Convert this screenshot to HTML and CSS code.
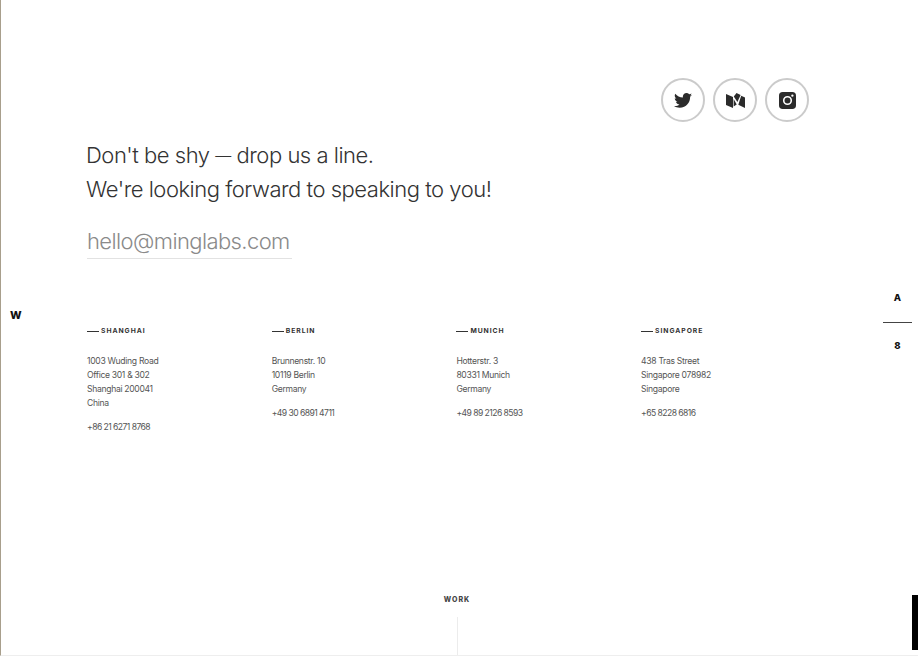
FILE: index.html
```html
<!DOCTYPE html>
<html lang="en">
<head>
    <meta charset="UTF-8">
    <meta name="viewport" content="width=device-width, initial-scale=1.0">
    <title>Contact</title>
    <link rel="stylesheet" href="styles.css">
</head>
<body>
<div class="page">
    <div class="social">
        <a class="social-btn" href="#">
            <svg width="18" height="15" viewBox="0 0 24 20"><path d="M24 2.400c-.9.4-1.800.7-2.800.8 1-.6 1.800-1.600 2.200-2.700-1 .6-2 1-3.100 1.200C19.300.7 18 .1 16.700.1c-2.700 0-4.900 2.200-4.900 4.900 0 .4 0 .8.100 1.100C7.700 5.900 4.100 4 1.700.9 1.200 1.600 1 2.500 1 3.400c0 1.700.9 3.200 2.200 4.100-.8 0-1.600-.2-2.200-.6v.1c0 2.400 1.700 4.400 3.900 4.800-.4.100-.8.200-1.300.2-.3 0-.6 0-.9-.1.6 2 2.400 3.400 4.600 3.400-1.700 1.300-3.800 2.100-6.100 2.100-.4 0-.8 0-1.200-.1 2.200 1.400 4.800 2.200 7.500 2.200 9.100 0 14-7.500 14-14v-.6c1-.7 1.800-1.600 2.500-2.500z"/></svg>
        </a>
        <a class="social-btn" href="#">
            <svg width="19" height="15" viewBox="0 0 19 15"><path d="M0 1 7 4V15L0 12z"/><path d="M7.800 3.400 10.500 0 14.600 2 11.400 9z"/><path d="M15.200 2.800 19 4.600V15L12.300 11.700z"/><path d="M7.600 6 10.700 11.500 7.600 13.500z"/></svg>
        </a>
        <a class="social-btn" href="#">
            <svg width="17" height="17" viewBox="0 0 16 16"><path fill-rule="evenodd" d="M3.500 0h9A3.500 3.500 0 0 1 16 3.500v9a3.500 3.500 0 0 1-3.500 3.500h-9A3.500 3.500 0 0 1 0 12.500v-9A3.500 3.500 0 0 1 3.500 0zM8 3.700a4.300 4.300 0 1 0 0 8.600 4.300 4.300 0 0 0 0-8.600zm0 1.500a2.800 2.800 0 1 1 0 5.600 2.800 2.800 0 0 1 0-5.600zM12.600 2.300a1.100 1.100 0 1 0 0 2.200 1.100 1.100 0 0 0 0-2.200z"/></svg>
        </a>
    </div>

    <p class="intro">Don't be shy <span class="dash">—</span> drop us a line.<br>We're looking forward to speaking to you!</p>
    <a class="email" href="#">hello@minglabs.com</a>

    <div class="offices">
        <div class="office">
            <h4>Shanghai</h4>
            <p>1003 Wuding Road<br>Office 301 &amp; 302<br>Shanghai 200041<br>China</p>
            <p class="phone">+86 21 6271 8768</p>
        </div>
        <div class="office">
            <h4>Berlin</h4>
            <p>Brunnenstr. 10<br>10119 Berlin<br>Germany</p>
            <p class="phone">+49 30 6891 4711</p>
        </div>
        <div class="office">
            <h4>Munich</h4>
            <p>Hotterstr. 3<br>80331 Munich<br>Germany</p>
            <p class="phone">+49 89 2126 8593</p>
        </div>
        <div class="office">
            <h4>Singapore</h4>
            <p>438 Tras Street<br>Singapore 078982<br>Singapore</p>
            <p class="phone">+65 8228 6816</p>
        </div>
    </div>
</div>

<!-- fixed bits around the edges -->
<div class="side-logo">W</div>
<div class="pager">
    <span>A</span>
    <div class="pager-line"></div>
    <span>8</span>
</div>
<div class="next-link">
    <span>Work</span>
    <div class="next-line"></div>
</div>
<div class="scroll-thumb"></div>
</body>
</html>
```

FILE: styles.css
```css
html, body {
    height: 100%;
}

body {
    font-family: Inter, "Liberation Sans", sans-serif;
    background-color: #ffffff;
    color: #333;
    margin: 0;
    overflow: hidden;
    border-left: 1px solid #a89f8c;
    border-bottom: 1px solid #eeeeee;
    box-sizing: border-box;
}

.page {
    width: 808px;
    padding: 78px 0 0 86px;
    box-sizing: border-box;
}

.social {
    display: flex;
    justify-content: flex-end;
    gap: 8px;
}

.social-btn {
    width: 44px;
    height: 44px;
    box-sizing: border-box;
    border: 2px solid #cbcbcb;
    border-radius: 50%;
    display: flex;
    align-items: center;
    justify-content: center;
}

.social-btn svg {
    fill: #2b2b2b;
}

.intro {
    font-size: 22px;
    font-weight: 300;
    letter-spacing: -0.48px;
    line-height: 34px;
    margin: 16px 0 0 -1px;
}

.dash {
    font-size: 16px;
    line-height: 1;
    vertical-align: 2px;
}

.email {
    display: inline-block;
    font-size: 22px;
    font-weight: 300;
    letter-spacing: -0.6px;
    line-height: 34px;
    color: #8a8a8a;
    text-decoration: none;
    border-bottom: 1px solid #e2e2e2;
    margin-top: 18px;
    padding-right: 2px;
}

.offices {
    display: grid;
    grid-template-columns: repeat(4, 184.7px);
    margin-top: 65px;
}

.office h4 {
    display: flex;
    align-items: center;
    gap: 2px;
    font-size: 6.8px;
    font-weight: 700;
    letter-spacing: 0.95px;
    line-height: 14px;
    text-transform: uppercase;
    color: #333;
    margin: 0 0 16px;
}

.office h4::before {
    content: "";
    width: 12px;
    height: 1px;
    background-color: #333;
}

.office p {
    font-size: 8.6px;
    font-weight: 400;
    letter-spacing: -0.32px;
    line-height: 14px;
    color: #555;
    margin: 0 0 10px;
}

.office .phone {
    letter-spacing: -0.55px;
}

.side-logo {
    position: absolute;
    left: 10px;
    top: 308px;
    font-size: 11px;
    font-weight: 800;
    line-height: 14px;
    color: #111;
}

.pager {
    position: absolute;
    left: 883px;
    top: 291px;
    width: 29px;
    text-align: center;
    font-size: 9.5px;
    font-weight: 800;
    line-height: 14px;
    color: #111;
}

.pager span {
    display: block;
}

.pager-line {
    height: 1px;
    background-color: #444;
    margin: 17px 0 16px;
}

.next-link {
    position: absolute;
    left: 427px;
    top: 593px;
    width: 60px;
    display: flex;
    flex-direction: column;
    align-items: center;
    font-size: 7px;
    font-weight: 800;
    letter-spacing: 1px;
    line-height: 14px;
    text-transform: uppercase;
    color: #444;
}

.next-line {
    width: 1px;
    height: 38px;
    margin-top: 10px;
    background-color: #ececec;
}

.scroll-thumb {
    position: absolute;
    right: 0;
    top: 595px;
    width: 6px;
    height: 55px;
    background-color: #000;
}
```
